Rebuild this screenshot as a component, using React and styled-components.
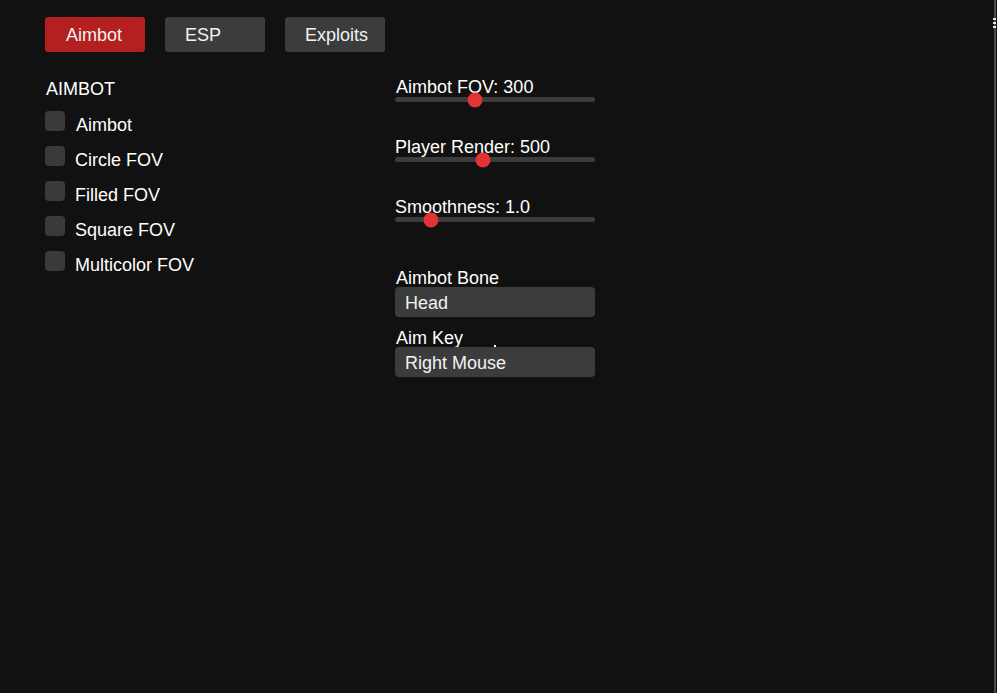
import React from "react";
import styled, { createGlobalStyle } from "styled-components";

const Global = createGlobalStyle`
  html, body { margin: 0; padding: 0; background: #111111; }
  body { font-family: "Liberation Sans", Arial, sans-serif; color: #ffffff; }
  #root { min-height: 693px; }
`;

const Page = styled.div`
  display: flex;
  height: 693px;
  background: #111111;
`;

const Main = styled.div`
  flex: 1;
  padding: 17px 0 0 45px;
`;

const Rail = styled.div`
  width: 2px;
  margin-right: 1px;
  background: #4a4d50;
  display: flex;
  flex-direction: column;
  padding-top: 18px;
  gap: 2px;
`;

const RailMark = styled.div`
  height: 2px;
  margin-left: -1px;
  width: 3px;
  background: #e8e8e8;
`;

const Tabs = styled.div`
  display: flex;
  gap: 20px;
`;

const Tab = styled.button`
  width: 100px;
  height: 35px;
  border: none;
  border-radius: 3px;
  padding: 2px 0 0 ${(p) => (p.$active ? "21px" : "20px")};
  text-align: left;
  font-family: inherit;
  font-size: 18px;
  color: #f2f2f2;
  background: ${(p) => (p.$active ? "#b41f1f" : "#3c3c3c")};
  cursor: pointer;
`;

const Columns = styled.div`
  display: flex;
  margin-top: 26px;
`;

const LeftCol = styled.div`
  width: 350px;
  display: flex;
  flex-direction: column;
`;

const Heading = styled.div`
  font-size: 18px;
  line-height: 22px;
  margin-left: 1px;
  margin-bottom: 12px;
`;

const CheckRow = styled.label`
  display: flex;
  align-items: flex-start;
  height: 35px;
`;

const Box = styled.span`
  width: 20px;
  height: 20px;
  border-radius: 4px;
  background: #3a3a3a;
  flex-shrink: 0;
  margin-top: -1px;
`;

const CheckText = styled.span`
  font-size: 18px;
  line-height: 22px;
  margin-top: 2px;
  margin-left: ${(p) => (p.$nudge ? "11px" : "10px")};
`;

const RightCol = styled.div`
  width: 200px;
  display: flex;
  flex-direction: column;
`;

const SliderBlock = styled.div`
  height: 60px;
  display: flex;
  flex-direction: column;
`;

const Label = styled.div`
  font-size: 18px;
  line-height: 18px;
  margin-left: ${(p) => (p.$indent ? "1px" : "0")};
  white-space: nowrap;
  position: relative;
  z-index: 1;
`;

const Track = styled.div`
  position: relative;
  height: 5px;
  border-radius: 3px;
  background: #3c3c3c;
  margin-top: 1px;
`;

const Thumb = styled.div`
  position: absolute;
  top: 50%;
  width: 15px;
  height: 15px;
  border-radius: 50%;
  background: #e23434;
  transform: translate(-50%, -50%);
  z-index: 2;
`;

const Spacer = styled.div`
  height: 9px;
`;

const SelectGroup = styled.div`
  display: flex;
  flex-direction: column;
  margin-bottom: 10px;
  position: relative;
`;

const SelectLabel = styled.div`
  font-size: 18px;
  line-height: 20px;
  margin-left: 1px;
  margin-top: 1px;
  margin-bottom: -1px;
`;

const SelectBox = styled.div`
  height: 30px;
  box-sizing: border-box;
  border-radius: 4px;
  background: #3c3c3c;
  font-size: 18px;
  line-height: 30px;
  padding: 1px 0 0 10px;
  color: #f2f2f2;
`;

const Dot = styled.span`
  position: absolute;
  left: 99px;
  top: 18px;
  width: 2px;
  height: 2px;
  background: #ffffff;
`;

const sliders = [
  { label: "Aimbot FOV: 300", pos: 80, indent: true },
  { label: "Player Render: 500", pos: 88 },
  { label: "Smoothness: 1.0", pos: 36 },
];

const checks = ["Aimbot", "Circle FOV", "Filled FOV", "Square FOV", "Multicolor FOV"];

export default function App() {
  return (
    <>
      <Global />
      <Page>
        <Main>
          <Tabs>
            <Tab $active>Aimbot</Tab>
            <Tab>ESP</Tab>
            <Tab>Exploits</Tab>
          </Tabs>
          <Columns>
            <LeftCol>
              <Heading>AIMBOT</Heading>
              {checks.map((c, i) => (
                <CheckRow key={c}>
                  <Box />
                  <CheckText $nudge={i === 0}>{c}</CheckText>
                </CheckRow>
              ))}
            </LeftCol>
            <RightCol>
              {sliders.map((s) => (
                <SliderBlock key={s.label}>
                  <Label $indent={s.indent}>{s.label}</Label>
                  <Track>
                    <Thumb style={{ left: s.pos + "px" }} />
                  </Track>
                </SliderBlock>
              ))}
              <Spacer />
              <SelectGroup>
                <SelectLabel>Aimbot Bone</SelectLabel>
                <SelectBox>Head</SelectBox>
              </SelectGroup>
              <SelectGroup>
                <SelectLabel>Aim Key</SelectLabel>
                <Dot />
                <SelectBox>Right Mouse</SelectBox>
              </SelectGroup>
            </RightCol>
          </Columns>
        </Main>
        <Rail>
          <RailMark />
          <RailMark />
          <RailMark />
        </Rail>
      </Page>
    </>
  );
}
